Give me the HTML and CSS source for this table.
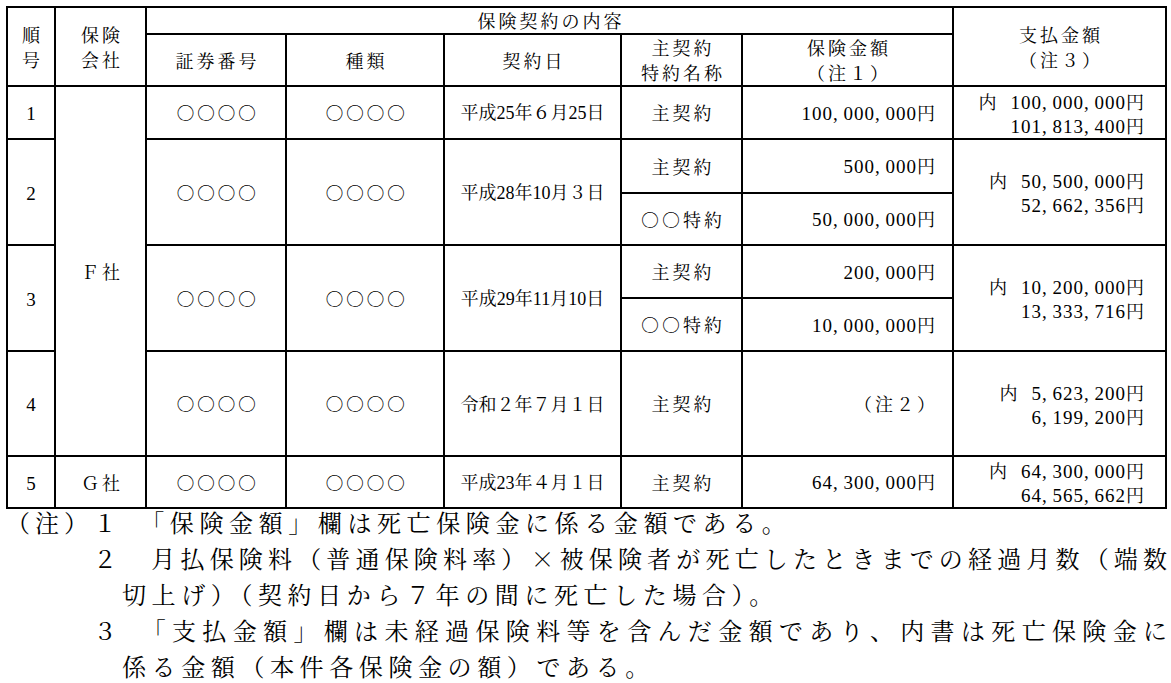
FILE: index.html
```html
<!DOCTYPE html>
<html lang="ja">
<head>
<meta charset="utf-8">
<title>保険契約の内容</title>
<link rel="stylesheet" href="styles.css">
</head>
<body>
<table class="tbl">
  <colgroup>
    <col class="w1"><col class="w2"><col class="w3"><col class="w4"><col class="w5"><col class="w6"><col class="w7"><col class="w8">
  </colgroup>
  <tr class="hA">
    <th rowspan="2">順<br>号</th>
    <th rowspan="2">保険<br>会社</th>
    <th colspan="5">保険契約の内容</th>
    <th rowspan="2">支払金額<br>（注３）</th>
  </tr>
  <tr class="hB">
    <th>証券番号</th>
    <th>種類</th>
    <th>契約日</th>
    <th>主契約<br>特約名称</th>
    <th>保険金額<br>（注１）</th>
  </tr>
  <tr class="r1">
    <td class="no"><span class="n">1</span></td>
    <td rowspan="6">Ｆ社</td>
    <td class="cir">○○○○</td>
    <td class="cir">○○○○</td>
    <td class="dt">平成<span class="n">25</span>年６月<span class="n">25</span>日</td>
    <td>主契約</td>
    <td class="amt"><span class="n">100<span class="c">,</span>000<span class="c">,</span>000</span>円</td>
    <td class="pay"><span class="pl"><span class="u">内</span><span class="n">100<span class="c">,</span>000<span class="c">,</span>000</span>円</span><span class="pl"><span class="n">101<span class="c">,</span>813<span class="c">,</span>400</span>円</span></td>
  </tr>
  <tr class="r2a">
    <td rowspan="2" class="no"><span class="n">2</span></td>
    <td rowspan="2" class="cir">○○○○</td>
    <td rowspan="2" class="cir">○○○○</td>
    <td rowspan="2" class="dt">平成<span class="n">28</span>年<span class="n">10</span>月３日</td>
    <td>主契約</td>
    <td class="amt"><span class="n">500<span class="c">,</span>000</span>円</td>
    <td rowspan="2" class="pay"><span class="pl"><span class="u">内</span><span class="n">50<span class="c">,</span>500<span class="c">,</span>000</span>円</span><span class="pl"><span class="n">52<span class="c">,</span>662<span class="c">,</span>356</span>円</span></td>
  </tr>
  <tr class="r2b">
    <td>○○特約</td>
    <td class="amt"><span class="n">50<span class="c">,</span>000<span class="c">,</span>000</span>円</td>
  </tr>
  <tr class="r3a">
    <td rowspan="2" class="no"><span class="n">3</span></td>
    <td rowspan="2" class="cir">○○○○</td>
    <td rowspan="2" class="cir">○○○○</td>
    <td rowspan="2" class="dt">平成<span class="n">29</span>年<span class="n">11</span>月<span class="n">10</span>日</td>
    <td>主契約</td>
    <td class="amt"><span class="n">200<span class="c">,</span>000</span>円</td>
    <td rowspan="2" class="pay"><span class="pl"><span class="u">内</span><span class="n">10<span class="c">,</span>200<span class="c">,</span>000</span>円</span><span class="pl"><span class="n">13<span class="c">,</span>333<span class="c">,</span>716</span>円</span></td>
  </tr>
  <tr class="r3b">
    <td>○○特約</td>
    <td class="amt"><span class="n">10<span class="c">,</span>000<span class="c">,</span>000</span>円</td>
  </tr>
  <tr class="r4">
    <td class="no"><span class="n">4</span></td>
    <td class="cir">○○○○</td>
    <td class="cir">○○○○</td>
    <td class="dt">令和２年７月１日</td>
    <td>主契約</td>
    <td class="amt note">（注２）</td>
    <td class="pay"><span class="pl"><span class="u">内</span><span class="n">5<span class="c">,</span>623<span class="c">,</span>200</span>円</span><span class="pl"><span class="n">6<span class="c">,</span>199<span class="c">,</span>200</span>円</span></td>
  </tr>
  <tr class="r5">
    <td class="no"><span class="n">5</span></td>
    <td>Ｇ社</td>
    <td class="cir">○○○○</td>
    <td class="cir">○○○○</td>
    <td class="dt">平成<span class="n">23</span>年４月１日</td>
    <td>主契約</td>
    <td class="amt"><span class="n">64<span class="c">,</span>300<span class="c">,</span>000</span>円</td>
    <td class="pay"><span class="pl"><span class="u">内</span><span class="n">64<span class="c">,</span>300<span class="c">,</span>000</span>円</span><span class="pl"><span class="n">64<span class="c">,</span>565<span class="c">,</span>662</span>円</span></td>
  </tr>
</table>
<div class="notes">
  <div class="label">（注）</div>
  <div class="items">
    <span class="ln">１　「保険金額」欄は死亡保険金に係る金額である。</span>
    <span class="ln just">２　月払保険料（普通保険料率）×被保険者が死亡したときまでの経過月数（端数</span>
    <span class="ln cont">切上げ）（契約日から７年の間に死亡した場合）。</span>
    <span class="ln just">３　「支払金額」欄は未経過保険料等を含んだ金額であり、内書は死亡保険金に</span>
    <span class="ln cont">係る金額（本件各保険金の額）である。</span>
  </div>
</div>
</body>
</html>
```

FILE: styles.css
```css
body {
  margin: 6px 0 0 6px;
  background: #fff;
  color: #000;
  font-family: "Noto Serif CJK JP", "Noto Sans CJK JP", serif;
}

.n {
  font-family: "Liberation Serif", "Noto Serif CJK JP", "Noto Sans CJK JP", serif;
}

.tbl {
  border-collapse: collapse;
  table-layout: fixed;
  width: 1159px;
}

.w1 { width: 48px; }
.w2 { width: 91px; }
.w3 { width: 140px; }
.w4 { width: 158px; }
.w5 { width: 177px; }
.w6 { width: 121px; }
.w7 { width: 211px; }
.w8 { width: 213px; }

.tbl th,
.tbl td {
  border: 2px solid #000;
  padding: 0 0 0 3px;
  text-align: center;
  vertical-align: middle;
  font-weight: normal;
  font-size: 18px;
  letter-spacing: 3px;
  line-height: 25px;
}

.hA { height: 25px; }
.hB { height: 50px; }
.r1 { height: 53px; }
.r2a { height: 54px; }
.r2b { height: 52px; }
.r3a { height: 53px; }
.r3b { height: 53px; }
.r4 { height: 105px; }
.r5 { height: 52px; }

.tbl td.no {
  font-size: 19px;
  letter-spacing: 0;
  padding: 0;
}

.tbl td.cir {
  letter-spacing: 2.5px;
}

.tbl td.dt {
  letter-spacing: 0;
  padding: 0;
}

.tbl td.amt {
  text-align: right;
  letter-spacing: 0;
  padding: 0 17px 0 0;
}

.tbl td.amt.note {
  letter-spacing: 3px;
  padding-right: 14px;
}

.amt .n,
.pay .n {
  font-size: 19px;
  letter-spacing: 1px;
}

.c {
  display: inline-block;
  width: 10.5px;
  text-align: left;
}

.tbl td.pay {
  text-align: right;
  letter-spacing: 0;
  padding: 0 21px 0 0;
  line-height: 24px;
}

.pl {
  display: block;
  height: 24px;
}

.u {
  margin-right: 14px;
}

.notes {
  display: grid;
  grid-template-columns: 87px 1079px;
  margin-top: -5px;
  font-size: 24px;
  letter-spacing: 5.6px;
  line-height: 36px;
}

.label {
  white-space: nowrap;
  letter-spacing: 5px;
}

.ln {
  display: block;
  height: 36px;
  white-space: nowrap;
}

.just {
  text-align: justify;
  text-align-last: justify;
  white-space: normal;
  letter-spacing: 5px;
}

.cont {
  padding-left: 29px;
}
```
